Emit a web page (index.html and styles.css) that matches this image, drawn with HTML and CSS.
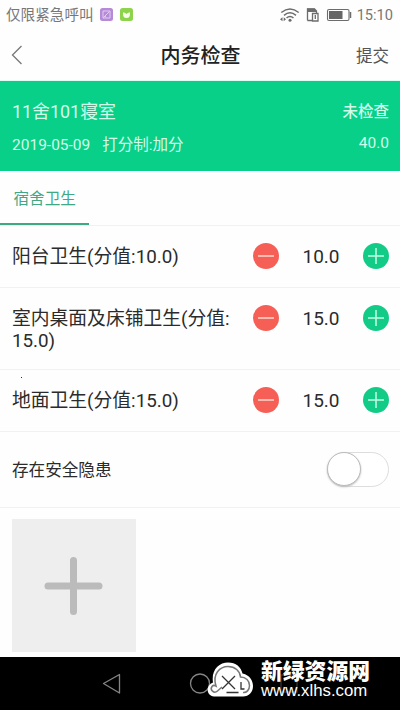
FILE: index.html
```html
<!DOCTYPE html>
<html lang="zh-CN">
<head>
<meta charset="utf-8">
<title>内务检查</title>
<link rel="stylesheet" href="styles.css">
</head>
<body>
<div class="phone">
  <div class="status">
    <span class="carrier">仅限紧急呼叫</span>
    <svg class="app" width="13" height="13" viewBox="0 0 13 13"><rect width="13" height="13" rx="2.5" fill="#b58ad6"/><path d="M3 3h7v7H3zM3.500 9.500l6-6M5 8l1 1.500" fill="none" stroke="#e3cdf2"/></svg>
    <svg class="app second" width="13" height="13" viewBox="0 0 13 13"><rect width="13" height="13" rx="2.500" fill="#8dd44c"/><path d="M3 4.500Q5 4 6.500 6Q8 4 10 4.500Q10.500 10 6.500 10Q2.500 10 3 4.500" fill="#f4ffe9"/></svg>
    <svg class="sys" width="74" height="18" viewBox="280 5 74 18" fill="none" stroke="#6c6c6c">
      <path d="M282.300 11.500Q291 4.500 299.700 11.500M285 14.300Q291 9.300 297 14.300M287.500 17Q291 14 294.500 17" stroke-width="1.500"/>
      <circle cx="291" cy="19.300" r="1.500" fill="#6c6c6c" stroke="none"/>
      <path d="M283.500 16.300l-2.500 2 2.500 2zM284.700 16.300l2.300 2-2.300 2z" fill="#6c6c6c" stroke="none"/>
      <path d="M308.500 19.500V8h7l2 2V12M308.500 19.500h4.500" stroke-width="1.300"/>
      <path d="M308 7.500h7.500l2.500 3.500h-10z" fill="#6c6c6c" stroke="none"/>
      <path d="M313.500 12.500h5.500v7.500h-5.500zM316.300 14v4" stroke-width="1.300"/>
      <rect x="328.500" y="8.500" width="21.500" height="11" rx="1.500" stroke-width="1.100"/>
      <path d="M330 10h13.500v8H330z" fill="#666" stroke="none"/>
      <path d="M351.500 11v6" stroke-width="1.500"/>
    </svg>
    <span class="time">15:10</span>
  </div>
  <header class="bar">
    <svg class="back" width="12" height="20" viewBox="0 0 12 20"><path d="M10.500 1L1.500 10l9 9" fill="none" stroke="#777" stroke-width="1.300"/></svg>
    <h1>内务检查</h1>
    <span class="submit">提交</span>
  </header>
  <section class="banner">
    <div class="line first"><span>11舍101寝室</span><span class="state">未检查</span></div>
    <div class="line"><span>2019-05-09<span class="mode">打分制:加分</span></span><span>40.0</span></div>
  </section>
  <nav class="tabs"><span class="tab">宿舍卫生</span></nav>
  <div class="row one">
    <span class="label">阳台卫生(分值:10.0)</span>
    <svg class="btn" viewBox="0 0 26 26"><circle cx="13" cy="13" r="13" fill="#f65f55"/><path d="M5 13h16" stroke="#ffd9d0" stroke-width="1.500"/></svg>
    <span class="value">10.0</span>
    <svg class="btn" viewBox="0 0 26 26"><circle cx="13" cy="13" r="13" fill="#12cb86"/><path d="M5 13h16M13 5v16" stroke="#c5ffe5" stroke-width="1.500"/></svg>
  </div>
  <div class="row two">
    <span class="label">室内桌面及床铺卫生(分值:<br>15.0)</span>
    <svg class="btn" viewBox="0 0 26 26"><circle cx="13" cy="13" r="13" fill="#f65f55"/><path d="M5 13h16" stroke="#ffd9d0" stroke-width="1.500"/></svg>
    <span class="value">15.0</span>
    <svg class="btn" viewBox="0 0 26 26"><circle cx="13" cy="13" r="13" fill="#12cb86"/><path d="M5 13h16M13 5v16" stroke="#c5ffe5" stroke-width="1.500"/></svg>
  </div>
  <div class="row three">
    <i class="speck"></i>
    <span class="label">地面卫生(分值:15.0)</span>
    <svg class="btn" viewBox="0 0 26 26"><circle cx="13" cy="13" r="13" fill="#f65f55"/><path d="M5 13h16" stroke="#ffd9d0" stroke-width="1.500"/></svg>
    <span class="value">15.0</span>
    <svg class="btn" viewBox="0 0 26 26"><circle cx="13" cy="13" r="13" fill="#12cb86"/><path d="M5 13h16M13 5v16" stroke="#c5ffe5" stroke-width="1.500"/></svg>
  </div>
  <div class="row danger">
    <span class="label">存在安全隐患</span>
    <span class="switch"><i class="knob"></i></span>
  </div>
  <div class="photos">
    <div class="add"><svg width="60" height="60" viewBox="0 0 60 60"><path d="M4 30h51M29.500 4.500v51" stroke="#bbb" stroke-width="7" stroke-linecap="round"/></svg></div>
  </div>
  <footer class="keys">
    <svg class="keyicons" width="400" height="53" viewBox="0 657 400 53" fill="none" stroke="#858585" stroke-width="1.300">
      <path d="M103.500 683.500L119.500 674.500V693z" stroke-linejoin="round"/>
      <circle cx="200" cy="683.500" r="9.500"/>
      <path d="M281 675h16v17h-16z" stroke="#333"/>
    </svg>
    <div class="mark">
      <svg width="46" height="36" viewBox="207 661 46 36">
        <path d="M214 696.500C206 696 205.500 685 213 682.500C211 670 219 662.500 228 662.500C236 662.500 241 667 242.500 673.500C250 675 253 681 253 686C253 692 249 696.500 243 696.500Z" fill="#fff"/>
        <path d="M222 687L217.500 691C214 694 209.500 690 212 686.500C213.500 684.500 216 686 216 686C212 674 220 666.500 228 666.500C235 666.500 240 671 240.500 677C246 677 249.500 681 249.500 685.500C249.500 690 246.500 693 243 692.500" fill="none" stroke="#777" stroke-width="1.500"/>
        <path d="M222 676l13 13M235 676l-13 13M226.500 692.500h12M241 682v7h3.500" fill="none" stroke="#333" stroke-width="1.300"/>
      </svg>
      <div class="words"><b>新绿资源网</b><span>www.xlhs.com</span></div>
    </div>
  </footer>
</div>
</body>
</html>
```

FILE: styles.css
```css
* { box-sizing: border-box; }
body { margin: 0; background: #fff; }
.phone {
  width: 400px; height: 710px; overflow: hidden;
  display: flex; flex-direction: column;
  background: #fefefe; color: #2b2b2b;
  font-family: Roboto, "Noto Sans CJK SC", sans-serif;
}
.phone > * { flex-shrink: 0; }
svg { display: block; flex: none; }
.status { height: 29px; display: flex; align-items: center; padding: 0 7px 0 6px; color: #777; }
.carrier { font-size: 14.6px; line-height: 20px; width: 88px; white-space: nowrap; }
.app { margin-left: 6px; }
.second { margin-left: 7px; }
.sys { margin-left: auto; }
.time { font-size: 14.6px; margin-left: 4px; }
.bar { height: 52px; display: flex; align-items: center; justify-content: space-between; padding: 1px 11px 0; border-bottom: 1px solid #dffbf4; }
.back { width: 33px; padding-right: 21px; }
.bar h1 { margin: 1px 0 0 1px; font-size: 20px; font-weight: 500; line-height: 26px; color: #222; }
.submit { font-size: 16.5px; color: #555; }
.banner { height: 90px; padding: 17px 11px 0 12px; background: #08d088; color: #d3fbe9; }
.line { display: flex; justify-content: space-between; align-items: center; height: 24px; font-size: 15.5px; }
.first { font-size: 17.9px; margin-bottom: 9px; }
.state { font-size: 15.5px; font-weight: 500; }
.mode { margin-left: 12px; }
.tabs { height: 55px; display: flex; border-bottom: 1px solid #f1f1f1; }
.tab { width: 89px; height: 54px; padding-left: 13.5px; line-height: 57px; font-size: 15.6px; color: #42a783; border-bottom: 2px solid #3cab84; }
.row { position: relative; display: flex; align-items: flex-start; padding: 20px 11px 0 12px; border-bottom: 1px solid #f1f1f1; }
.label { flex: 1; font-size: 18.8px; line-height: 22px; white-space: nowrap; }
.btn { width: 26px; height: 26px; margin-top: -3px; }
.value { width: 84px; font-size: 19px; line-height: 22px; text-align: center; }
.one { height: 62px; }
.two { height: 82px; }
.three { height: 62px; }
.danger { height: 76px; align-items: center; padding-top: 0; }
.danger .label { font-size: 16.6px; padding-top: 2px; }
.speck { position: absolute; left: 21px; top: 7px; width: 1px; height: 1px; background: #333; }
.switch { width: 62px; height: 35px; border: 1px solid #ddd; border-radius: 18px; background: #fff; }
.knob { display: block; width: 34px; height: 34px; margin: -1px; border: 1px solid #bbb; border-radius: 50%; background: #fff; box-shadow: 0 1px 2px #bbb; }
.photos { height: 149px; padding: 11px 12px 0; }
.add { width: 124px; height: 133px; display: flex; align-items: center; justify-content: center; background: #eee; }
.keys { position: relative; height: 53px; background: #000; }
.mark { position: absolute; left: 207px; top: 4px; display: flex; color: #fff; }
.words { display: flex; flex-direction: column; margin-left: 8px; white-space: nowrap; }
.words b { font-size: 21.8px; line-height: 22px; font-weight: 900; }
.words span { font: 16.8px/14px "Liberation Sans", sans-serif; margin-top: 1px; }
```
